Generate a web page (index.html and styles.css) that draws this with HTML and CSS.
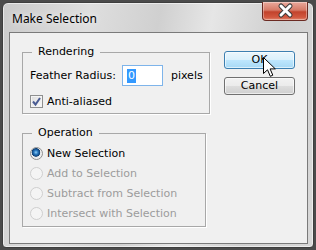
FILE: index.html
```html
<!DOCTYPE html>
<html lang="en">
<head>
    <meta charset="UTF-8">
    <title>Make Selection</title>
    <link rel="stylesheet" href="styles.css">
</head>
<body>

    <div class="window">
        <div class="titlebar">
            <span class="title">Make Selection</span>
            <div class="close">
                <svg width="46" height="19" viewBox="0 0 46 19">
                    <path d="M19 5 L28 14 M28 5 L19 14" stroke="#3b3b3b" stroke-width="5" stroke-linecap="round"/>
                    <path d="M19 5 L28 14 M28 5 L19 14" stroke="#ffffff" stroke-width="3" stroke-linecap="round"/>
                </svg>
            </div>
        </div>

        <div class="client">
            <div class="groups">
                <fieldset class="group rendering">
                    <legend>Rendering</legend>
                    <div class="row">
                        <span>Feather Radius:</span>
                        <div class="field"><span class="sel">0</span></div>
                        <span class="unit">pixels</span>
                    </div>
                    <div class="row check">
                        <span class="checkbox">
                            <svg width="13" height="13" viewBox="0 0 13 13">
                                <path d="M3 6.5 L5.5 9.5 L10 3" fill="none" stroke="#4a5c93" stroke-width="2"/>
                            </svg>
                        </span>
                        <span>Anti-aliased</span>
                    </div>
                </fieldset>

                <fieldset class="group operation">
                    <legend>Operation</legend>
                    <div class="row radio-row"><span class="radio on"></span><span>New Selection</span></div>
                    <div class="row radio-row off"><span class="radio"></span><span>Add to Selection</span></div>
                    <div class="row radio-row off"><span class="radio"></span><span>Subtract from Selection</span></div>
                    <div class="row radio-row off"><span class="radio"></span><span>Intersect with Selection</span></div>
                </fieldset>
            </div>

            <div class="buttons">
                <div class="btn ok">OK</div>
                <div class="btn">Cancel</div>
                <svg class="cursor" width="14" height="21" viewBox="0 0 14 21">
                    <path d="M0.5 0.5 L0.5 16.5 L4.5 12.8 L7.3 19.3 L9.8 18.2 L7.1 11.9 L12.3 11.9 Z" fill="#ffffff" stroke="#000000" stroke-width="1"/>
                </svg>
            </div>
        </div>
    </div>

</body>
</html>
```

FILE: styles.css
```css
* {
    box-sizing: border-box;
    margin: 0;
    padding: 0;
}
body {
    width: 316px;
    height: 250px;
    background: #4b4b4b;
    font-family: "DejaVu Sans", Verdana, sans-serif;
    font-size: 11px;
    color: #000;
    overflow: hidden;
}
.window {
    margin: 2px 0 0 2px;
    width: 312px;
    height: 246px;
    border: 1px solid #3e3e3e;
    border-radius: 6px 6px 4px 4px;
    padding: 0 5px 3px 6px;
    background: linear-gradient(100deg, #cbcbcb 0%, #dedede 25%, #d0d0d0 45%, #e6e6e6 60%, #cfcfcf 80%, #d8d8d8 100%);
    box-shadow: inset 0 0 0 1px rgba(255,255,255,0.55);
    display: flex;
    flex-direction: column;
}
.titlebar {
    height: 29px;
    display: flex;
    justify-content: space-between;
    align-items: flex-start;
}
.title {
    font-family: "Noto Sans", "Open Sans", sans-serif;
    font-size: 12px;
    margin: 7px 0 0 3px;
    text-shadow: 0 0 6px rgba(255,255,255,0.9);
}
.close {
    width: 46px;
    height: 19px;
    margin-top: -1px;
    border: 1px solid #6b2a22;
    border-top: none;
    border-radius: 0 0 4px 4px;
    background: linear-gradient(#e9a99c 0%, #d67a67 45%, #c2432c 55%, #d2583f 85%, #e0876f 100%);
    box-shadow: inset 0 0 0 1px rgba(255,255,255,0.35);
}
.close svg {
    display: block;
    margin: -1px 0 0 -1px;
}
.client {
    flex: 1;
    border: 1px solid #7a7a7a;
    background: #f0f0f0;
    display: flex;
}
.groups {
    padding: 12px 0 0 12px;
    width: 196px;
}
.group {
    width: 184px;
    border: 1px solid #a8a8a8;
    box-shadow: 1px 1px 0 #ffffff;
    padding: 0 6px 4px 7px;
}
.group legend {
    margin-left: 2px;
    padding: 0 6px;
    line-height: 14px;
}
.row {
    display: flex;
    align-items: center;
    white-space: nowrap;
}
.rendering .row:first-of-type {
    margin-top: 6px;
    height: 21px;
}
.field {
    width: 41px;
    height: 21px;
    margin: 0 8px 0 6px;
    border: 1px solid #7eb4ea;
    background: #fff;
    padding: 3px 0 0 4px;
}
.sel {
    display: inline-block;
    background: #3399ff;
    color: #fff;
    height: 14px;
    line-height: 14px;
    padding: 0 1px;
}
.check {
    margin-top: 7px;
    height: 16px;
}
.checkbox {
    width: 13px;
    height: 13px;
    margin-right: 4px;
    border: 1px solid #8e8f8f;
    background: linear-gradient(135deg, #dcdcdc, #fbfbfb);
    box-shadow: inset 0 0 0 1px #f4f4f4;
}
.checkbox svg {
    display: block;
    margin: -1px 0 0 -1px;
}
.operation {
    margin-top: 12px;
    padding-top: 3px;
    padding-bottom: 3px;
}
.radio-row {
    height: 20px;
}
.radio {
    width: 13px;
    height: 13px;
    margin-right: 4px;
    border-radius: 50%;
    border: 1px solid #8e8f8f;
    background: linear-gradient(135deg, #d6d6d6, #fafafa);
}
.radio.on {
    background: radial-gradient(circle at 45% 40%, #8fd0f7 0, #2a79c0 2px, #0e3f74 4px, #eaeaea 4.6px, #f8f8f8 100%);
}
.off {
    color: #9c9c9c;
}
.off .radio {
    border-color: #cfcfcf;
    background: #f4f4f4;
}
.buttons {
    position: relative;
    margin-left: 18px;
    padding-top: 18px;
    display: flex;
    flex-direction: column;
    gap: 8px;
}
.btn {
    width: 71px;
    height: 18px;
    border: 1px solid #707070;
    border-radius: 3px;
    background: linear-gradient(#f2f2f2 0%, #ebebeb 50%, #dddddd 51%, #cfcfcf 100%);
    box-shadow: inset 0 0 0 1px rgba(255,255,255,0.6);
    text-align: center;
    line-height: 16px;
}
.btn.ok {
    border-color: #3c7fb1;
    background: linear-gradient(#eaf6fd 0%, #d9f0fc 50%, #bee6fd 51%, #a7d9f5 100%);
}
.cursor {
    position: absolute;
    left: 39px;
    top: 24px;
}
```
